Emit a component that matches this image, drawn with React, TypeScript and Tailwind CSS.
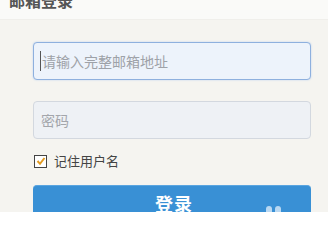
export default function App() {
  return (
    <div
      className="w-[328px] h-[212px] overflow-hidden bg-[#f5f4f0]"
      style={{ fontFamily: '"Noto Sans CJK SC", "Noto Sans", sans-serif' }}
    >
      <div className="h-[20px] bg-[#fafaf8] border-b border-[#f0efeb] overflow-hidden">
        <div className="-mt-[8px] pl-[9px] text-[16px] leading-[16px] font-bold text-[#555]">
          邮箱登录
        </div>
      </div>

      <div className="pl-[33px] pr-[17px] pt-[22px] flex flex-col">
        <div className="h-[38px] rounded-[4px] border border-[#8eb0de] bg-[#edf3fb] shadow-[0_0_2px_#b9cfee] flex items-center pl-[6px]">
          <span className="w-px h-[20px] bg-[#555] mr-px" />
          <span className="text-[14px] text-[#9ea2a8]">请输入完整邮箱地址</span>
        </div>

        <div className="mt-[21px] h-[38px] rounded-[4px] border border-[#d3d8df] bg-[#eef1f5] flex items-center pl-[7px]">
          <span className="text-[14px] text-[#a3a6ab]">密码</span>
        </div>

        <div className="mt-[15px] h-[14px] flex items-center gap-[7px] pl-px">
          <span className="w-[13px] h-[13px] border border-[#444] bg-white flex items-center justify-center">
            <svg width="10" height="10" viewBox="0 0 10 10">
              <path d="M1.5 5 L4 7.8 L8.5 2" fill="none" stroke="#e39b22" strokeWidth="2" />
            </svg>
          </span>
          <span className="text-[13px] text-[#444]">记住用户名</span>
        </div>

        <div className="relative mt-[17px] h-[40px] rounded-[4px] bg-[#3990d5] border-t border-[#5aa5e0] flex items-center justify-center">
          <span className="text-[18px] font-bold text-white tracking-[1px] ml-[4px] mb-[4px]">登录</span>
          <span className="absolute left-[233px] top-[20px] flex gap-[3px]">
            <span className="w-[6px] h-[10px] rounded-full bg-[#b9d8f2]" />
            <span className="w-[6px] h-[10px] rounded-full bg-[#b9d8f2]" />
          </span>
        </div>
      </div>
    </div>
  )
}
